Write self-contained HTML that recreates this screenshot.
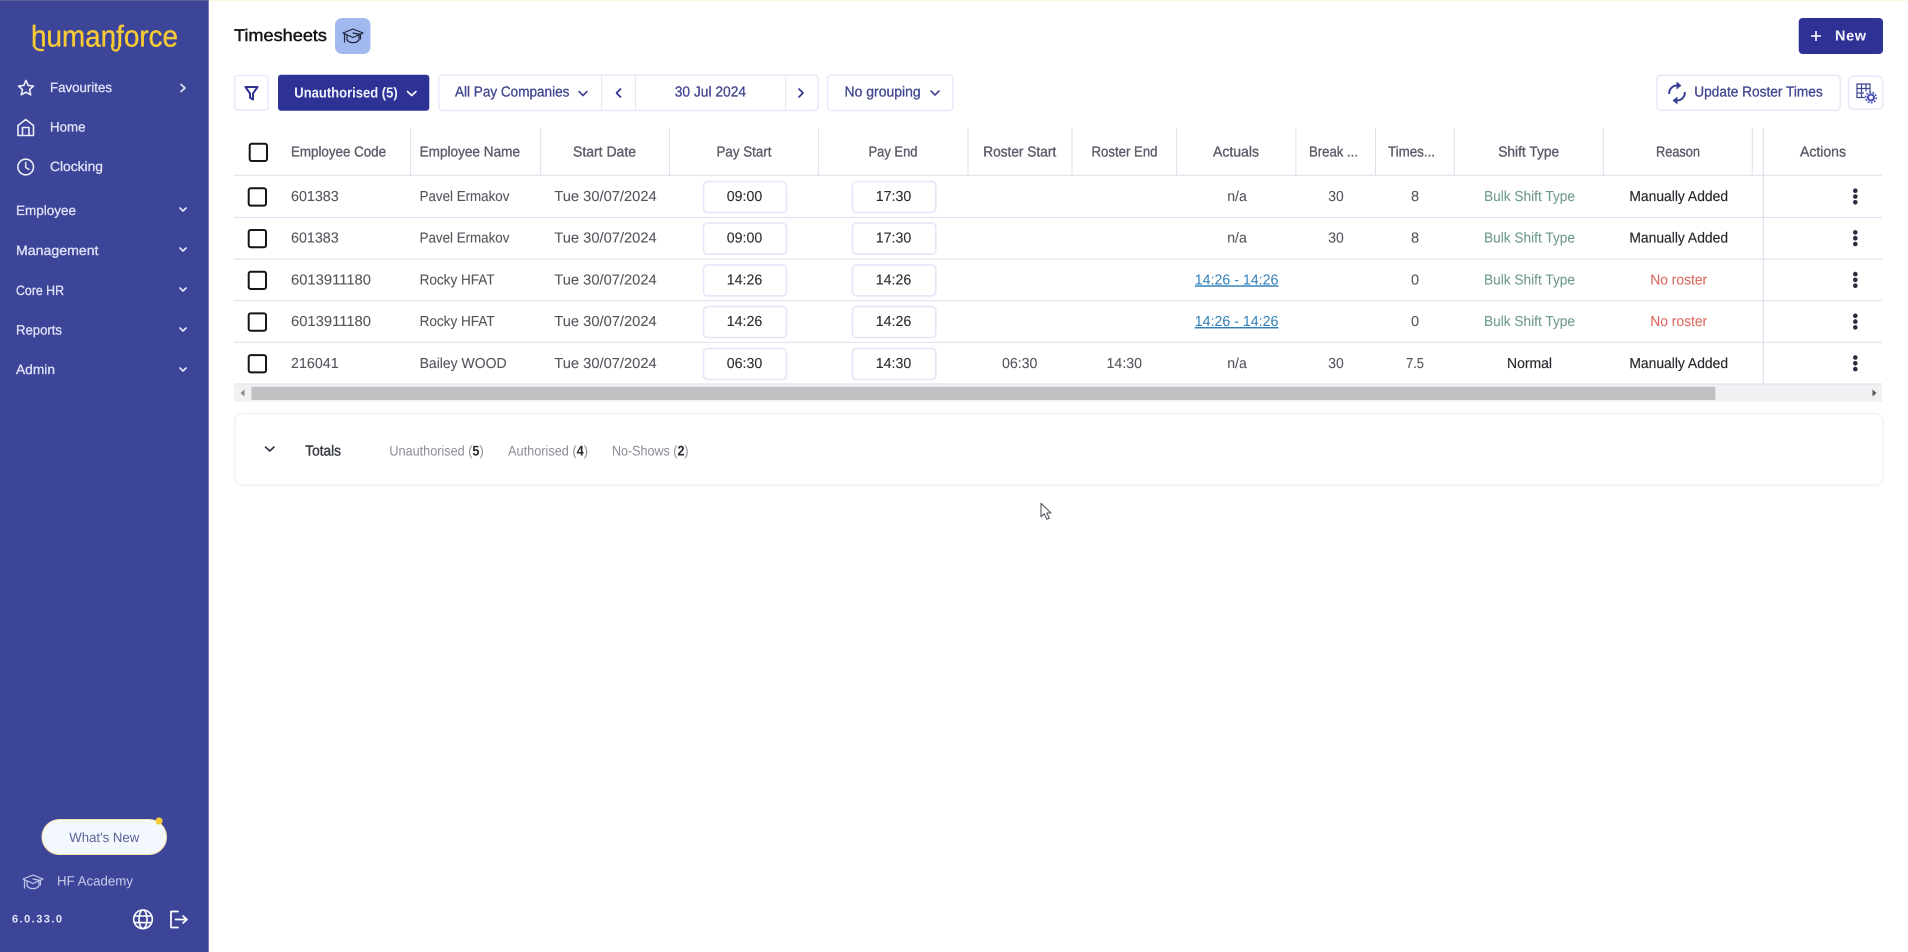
<!DOCTYPE html>
<html lang="en">
<head>
<meta charset="utf-8">
<title>Timesheets</title>
<style>
html,body{margin:0;padding:0;background:#fff;width:1908px;height:952px;overflow:hidden}
svg{display:block;position:absolute;left:0;top:0}
text{font-family:"Liberation Sans",sans-serif;font-size:14.5px;text-rendering:geometricPrecision}
.m{text-anchor:middle}
.nav{font-size:13.5px;fill:#dfe2f6;font-weight:400;stroke:#dfe2f6;stroke-width:.3}
.th{fill:#5c5c69;stroke:#5c5c69;stroke-width:.35}
.td{fill:#55555d;stroke:#55555d;stroke-width:.1}
.dk{fill:#26262c;stroke:#26262c;stroke-width:.15}
.tm{fill:#2b2b30;stroke:#2b2b30;stroke-width:.1}
.gr{fill:#6f9c88;stroke:#6f9c88;stroke-width:.1}
.rd{fill:#dc6a60;stroke:#dc6a60;stroke-width:.1}
.ln{fill:#2f7fb8;text-decoration:underline}
.btn{fill:#41468f;stroke:#41468f;stroke-width:.3}
.mut{fill:#8b8c96;font-size:14px}
.mut tspan{fill:#26262c;font-weight:700}
.box{fill:#fff;stroke:#e6e9f8;stroke-width:1.5}
.inp{fill:#fff;stroke:#e3e7f8;stroke-width:1.6}
.cb{fill:#fff;stroke:#151515;stroke-width:2}
.sep{stroke:#dfe1ea;stroke-width:1}
.row{stroke:#dfe2ee;stroke-width:1.2}
.chev{fill:none;stroke-width:1.6;stroke-linecap:round;stroke-linejoin:round}
</style>
</head>
<body>
<svg width="1908" height="952" viewBox="0 0 1908 952" xmlns="http://www.w3.org/2000/svg">
<defs>
<g id="cap" fill="none" stroke-linejoin="round" stroke-linecap="round">
<path d="M0-7 10-3 0 1.5-10-3Z"/>
<path d="M-6-1V4C-3.5 7.5 3.5 7.5 6 4V-1"/>
<path d="M0-3 7.5-1.5V3"/>
<path d="M-8.5-2V6"/>
</g>
<g id="dots" fill="#2c2c40"><circle cx="1855.3" cy="0" r="2.3"/><circle cx="1855.3" cy="5.8" r="2.3"/><circle cx="1855.3" cy="11.6" r="2.3"/></g>
</defs>

<rect width="1908" height="952" fill="#fff"/>
<rect x="209" width="1699" height="1.2" fill="#fdf7df"/>

<!-- sidebar -->
<rect width="208.7" height="952" fill="#3d4599"/>
<rect width="208.7" height="1" fill="#62648f"/>

<text x="31" y="46.5" style="font-size:30px;fill:#f8cb35;stroke:#f8cb35;stroke-width:.35" textLength="147" lengthAdjust="spacingAndGlyphs">humanforce</text>
<path d="M34 44C34.5 48.5 37 50.5 43 50M112 45C112 49 113 50.5 116 50.5 119 50.5 119.5 47 119.5 43" fill="none" stroke="#f8cb35" stroke-width="2.3" stroke-linecap="round"/>

<path d="M26 80.5 28.2 85.4 33.5 86 29.5 89.6 30.7 94.8 26 92.2 21.3 94.8 22.5 89.6 18.5 86 23.8 85.4Z" fill="none" stroke="#eceefa" stroke-width="1.6" stroke-linejoin="round"/>
<text class="nav" x="50" y="92" textLength="62" lengthAdjust="spacingAndGlyphs">Favourites</text>
<path class="chev" d="M181 84.5 185 88 181 91.5" stroke="#e8eaf8"/>

<path d="M18 135.5V125.5L25.7 119.5 33.5 125.5V135.5ZM22.5 135.5V127.5H29V135.5" fill="none" stroke="#eceefa" stroke-width="1.6" stroke-linejoin="round"/>
<text class="nav" x="50" y="131.7" textLength="35.5" lengthAdjust="spacingAndGlyphs">Home</text>

<circle cx="25.7" cy="167" r="7.8" fill="none" stroke="#eceefa" stroke-width="1.6"/>
<path d="M25.7 162.5V167.5L29 169.5" fill="none" stroke="#eceefa" stroke-width="1.5" stroke-linecap="round"/>
<text class="nav" x="50" y="171" textLength="53" lengthAdjust="spacingAndGlyphs">Clocking</text>

<text class="nav" x="16" y="215" textLength="60" lengthAdjust="spacingAndGlyphs">Employee</text>
<path class="chev" d="M180 209 183 212 186 209" stroke="#e8eaf8" transform="translate(0 -1)"/>
<text class="nav" x="16" y="255" textLength="82.5" lengthAdjust="spacingAndGlyphs">Management</text>
<path class="chev" d="M180 249 183 252 186 249" stroke="#e8eaf8" transform="translate(0 -1)"/>
<text class="nav" x="16" y="295" textLength="48" lengthAdjust="spacingAndGlyphs">Core HR</text>
<path class="chev" d="M180 289 183 292 186 289" stroke="#e8eaf8" transform="translate(0 -1)"/>
<text class="nav" x="16" y="334.3" textLength="46" lengthAdjust="spacingAndGlyphs">Reports</text>
<path class="chev" d="M180 329 183 332 186 329" stroke="#e8eaf8" transform="translate(0 -1)"/>
<text class="nav" x="16" y="374" textLength="39" lengthAdjust="spacingAndGlyphs">Admin</text>
<path class="chev" d="M180 369 183 372 186 369" stroke="#e8eaf8" transform="translate(0 -1)"/>

<rect x="42" y="819.5" width="124.5" height="35" rx="17.5" fill="#f3f8fe" stroke="#f7e3ab" stroke-width="1"/>
<circle cx="159" cy="821" r="3.6" fill="#f8cb35"/>
<text x="69.3" y="842" style="font-size:13.5px;fill:#5d6399" textLength="70" lengthAdjust="spacingAndGlyphs">What's New</text>
<use href="#cap" x="33" y="882" stroke="#c3c8e8" stroke-width="1.2"/>
<text x="57" y="885.7" style="font-size:13.5px;fill:#c8cce9" textLength="76" lengthAdjust="spacingAndGlyphs">HF Academy</text>
<text x="12" y="922.3" style="font-size:11px;font-weight:700;fill:#e4e7f6" textLength="50">6.0.33.0</text>
<g fill="none" stroke="#fff" stroke-width="1.6">
<circle cx="143" cy="919.3" r="9.3"/>
<ellipse cx="143" cy="919.3" rx="4" ry="9.3"/>
<path d="M134 916H152M134 922.6H152"/>
</g>
<path d="M178 911.5H171V927.5H178M175.5 919.5H186.5M183 916 187 919.5 183 923" fill="none" stroke="#fff" stroke-width="1.7" stroke-linejoin="round" stroke-linecap="round"/>

<!-- title -->
<text x="234" y="41" style="font-size:17px;fill:#141414;stroke:#141414;stroke-width:.45" textLength="93" lengthAdjust="spacingAndGlyphs">Timesheets</text>
<rect x="335" y="18" width="35.5" height="36" rx="7" fill="#a2b9f0"/>
<use href="#cap" x="353" y="36" stroke="#20243c" stroke-width="1.2"/>

<rect x="1798.7" y="18" width="84.3" height="36" rx="4" fill="#2f3295"/>
<path d="M1816 31V41M1811 36H1821" stroke="#fff" stroke-width="1.6"/>
<text x="1835" y="40.5" style="font-size:14.5px;font-weight:700;fill:#f2f3fb" textLength="31">New</text>

<!-- toolbar -->
<rect x="234.7" y="75.5" width="33.5" height="34.5" rx="3" class="box"/>
<path d="M245.5 87H257.5L253 93.5V99.5L250 97.8V93.5Z" fill="none" stroke="#2f3295" stroke-width="2" stroke-linejoin="round"/>
<rect x="278" y="74.7" width="151.3" height="36" rx="3" fill="#2f3295"/>
<text x="294.3" y="97.3" style="font-size:14.5px;font-weight:700;fill:#eef0fb" textLength="103.4" lengthAdjust="spacingAndGlyphs">Unauthorised (5)</text>
<path class="chev" d="M407.5 91.5 411.7 95.5 416 91.5" stroke="#fff"/>

<rect x="438.8" y="75" width="379.4" height="35.5" rx="4" class="box"/>
<path d="M601.6 75V110.5M635.5 75V110.5M785.7 75V110.5" stroke="#e3e6f6" stroke-width="1"/>
<text class="btn" x="455" y="96.7" textLength="114.4" lengthAdjust="spacingAndGlyphs">All Pay Companies</text>
<path class="chev" d="M579 91.5 583 95.5 587 91.5" stroke="#41468f"/>
<path class="chev" d="M620.5 89 616.5 93 620.5 97" stroke="#2f3295"/>
<text class="btn m" x="710.4" y="96.7" textLength="71.4" lengthAdjust="spacingAndGlyphs">30 Jul 2024</text>
<path class="chev" d="M799 89 803 93 799 97" stroke="#2f3295"/>

<rect x="827.5" y="75" width="125.5" height="35.5" rx="4" class="box"/>
<text class="btn" x="844.5" y="96.7" textLength="76.2" lengthAdjust="spacingAndGlyphs">No grouping</text>
<path class="chev" d="M931 91 935 95 939 91" stroke="#41468f"/>

<rect x="1656.9" y="75.2" width="183.3" height="35" rx="4" class="box"/>
<g fill="none" stroke="#3a3f96" stroke-width="2">
<path d="M1669.2 94A7.8 7.8 0 0 1 1677 85.5"/>
<path d="M1684.8 92A7.8 7.8 0 0 1 1677 100.5"/>
</g>
<path d="M1676.5 81.5 1681.5 85.5 1676.5 89.5ZM1677.5 96.5 1672.5 100.5 1677.5 104.5Z" fill="#3a3f96"/>
<text class="btn" x="1694.3" y="96.7" textLength="128.4" lengthAdjust="spacingAndGlyphs">Update Roster Times</text>

<rect x="1848.5" y="76.2" width="34.3" height="33" rx="5" class="box"/>
<path d="M1870 93V84H1857V97.5H1865M1857 88.5H1870M1861.5 84V97.5M1866 84V91.5M1857 93H1864" fill="none" stroke="#3f4492" stroke-width="1.2"/>
<circle cx="1871" cy="97.5" r="3" fill="none" stroke="#4d56b8" stroke-width="2.2"/>
<circle cx="1871" cy="97.5" r="5.3" fill="none" stroke="#4d56b8" stroke-width="1.6" stroke-dasharray="1.8 1.5"/>

<!-- table header -->
<rect x="249.7" y="143.7" width="17.3" height="17.3" rx="2" class="cb"/>
<path class="sep" d="M410.6 128V175M540.4 128V175M669.4 128V175M818.4 128V175M968 128V175M1072 128V175M1176.6 128V175M1295.9 128V175M1375.5 128V175M1454.3 128V175M1603.3 128V175M1752.3 128V175"/>
<path d="M1763.3 128V384" stroke="#d8dce8" stroke-width="1"/>
<text class="th" x="291" y="156.7" textLength="95" lengthAdjust="spacingAndGlyphs">Employee Code</text>
<text class="th" x="419.6" y="156.7" textLength="100.4" lengthAdjust="spacingAndGlyphs">Employee Name</text>
<text class="th m" x="604.5" y="156.7" textLength="63" lengthAdjust="spacingAndGlyphs">Start Date</text>
<text class="th m" x="744" y="156.7" textLength="55" lengthAdjust="spacingAndGlyphs">Pay Start</text>
<text class="th m" x="893" y="156.7" textLength="49" lengthAdjust="spacingAndGlyphs">Pay End</text>
<text class="th m" x="1019.7" y="156.7" textLength="73" lengthAdjust="spacingAndGlyphs">Roster Start</text>
<text class="th m" x="1124.5" y="156.7" textLength="66" lengthAdjust="spacingAndGlyphs">Roster End</text>
<text class="th m" x="1236" y="156.7" textLength="46" lengthAdjust="spacingAndGlyphs">Actuals</text>
<text class="th" x="1309" y="156.7" textLength="49" lengthAdjust="spacingAndGlyphs">Break ...</text>
<text class="th" x="1388" y="156.7" textLength="47" lengthAdjust="spacingAndGlyphs">Times...</text>
<text class="th m" x="1528.7" y="156.7" textLength="61" lengthAdjust="spacingAndGlyphs">Shift Type</text>
<text class="th m" x="1678" y="156.7" textLength="44" lengthAdjust="spacingAndGlyphs">Reason</text>
<text class="th m" x="1823" y="156.7" textLength="46" lengthAdjust="spacingAndGlyphs">Actions</text>

<path class="row" d="M234 175.3H1882M234 217.5H1882M234 259H1882M234 300.7H1882M234 342.3H1882M234 384H1882"/>

<!-- row 1 -->
<rect x="248.7" y="188.3" width="17.3" height="17.3" rx="2" class="cb"/>
<text class="td" x="291" y="201" textLength="47.7" lengthAdjust="spacingAndGlyphs">601383</text>
<text class="td" x="419.6" y="201" textLength="89.8" lengthAdjust="spacingAndGlyphs">Pavel Ermakov</text>
<text class="td m" x="605.5" y="201" textLength="102.4" lengthAdjust="spacingAndGlyphs">Tue 30/07/2024</text>
<rect x="703.5" y="181.5" width="83" height="31" rx="4" class="inp"/>
<text class="tm m" x="744.5" y="201" textLength="35.5" lengthAdjust="spacingAndGlyphs">09:00</text>
<rect x="852.5" y="181.5" width="83.3" height="31" rx="4" class="inp"/>
<text class="tm m" x="893.5" y="201" textLength="35.5" lengthAdjust="spacingAndGlyphs">17:30</text>
<text class="td m" x="1237" y="201" textLength="19.6" lengthAdjust="spacingAndGlyphs">n/a</text>
<text class="td m" x="1336" y="201" textLength="15.5" lengthAdjust="spacingAndGlyphs">30</text>
<text class="td m" x="1415" y="201">8</text>
<text class="gr m" x="1529.5" y="201" textLength="91" lengthAdjust="spacingAndGlyphs">Bulk Shift Type</text>
<text class="dk m" x="1678.7" y="201" textLength="98.7" lengthAdjust="spacingAndGlyphs">Manually Added</text>
<use href="#dots" y="190.7"/>

<!-- row 2 -->
<rect x="248.7" y="230" width="17.3" height="17.3" rx="2" class="cb"/>
<text class="td" x="291" y="242.7" textLength="47.7" lengthAdjust="spacingAndGlyphs">601383</text>
<text class="td" x="419.6" y="242.7" textLength="89.8" lengthAdjust="spacingAndGlyphs">Pavel Ermakov</text>
<text class="td m" x="605.5" y="242.7" textLength="102.4" lengthAdjust="spacingAndGlyphs">Tue 30/07/2024</text>
<rect x="703.5" y="223.2" width="83" height="31" rx="4" class="inp"/>
<text class="tm m" x="744.5" y="242.7" textLength="35.5" lengthAdjust="spacingAndGlyphs">09:00</text>
<rect x="852.5" y="223.2" width="83.3" height="31" rx="4" class="inp"/>
<text class="tm m" x="893.5" y="242.7" textLength="35.5" lengthAdjust="spacingAndGlyphs">17:30</text>
<text class="td m" x="1237" y="242.7" textLength="19.6" lengthAdjust="spacingAndGlyphs">n/a</text>
<text class="td m" x="1336" y="242.7" textLength="15.5" lengthAdjust="spacingAndGlyphs">30</text>
<text class="td m" x="1415" y="242.7">8</text>
<text class="gr m" x="1529.5" y="242.7" textLength="91" lengthAdjust="spacingAndGlyphs">Bulk Shift Type</text>
<text class="dk m" x="1678.7" y="242.7" textLength="98.7" lengthAdjust="spacingAndGlyphs">Manually Added</text>
<use href="#dots" y="232.4"/>

<!-- row 3 -->
<rect x="248.7" y="271.7" width="17.3" height="17.3" rx="2" class="cb"/>
<text class="td" x="291" y="284.3" textLength="80" lengthAdjust="spacingAndGlyphs">6013911180</text>
<text class="td" x="419.6" y="284.3" textLength="75" lengthAdjust="spacingAndGlyphs">Rocky HFAT</text>
<text class="td m" x="605.5" y="284.3" textLength="102.4" lengthAdjust="spacingAndGlyphs">Tue 30/07/2024</text>
<rect x="703.5" y="264.9" width="83" height="31" rx="4" class="inp"/>
<text class="tm m" x="744.5" y="284.3" textLength="35.5" lengthAdjust="spacingAndGlyphs">14:26</text>
<rect x="852.5" y="264.9" width="83.3" height="31" rx="4" class="inp"/>
<text class="tm m" x="893.5" y="284.3" textLength="35.5" lengthAdjust="spacingAndGlyphs">14:26</text>
<text class="ln m" x="1236.6" y="284.3" textLength="83.6" lengthAdjust="spacingAndGlyphs">14:26 - 14:26</text>
<text class="td m" x="1415" y="284.3">0</text>
<text class="gr m" x="1529.5" y="284.3" textLength="91" lengthAdjust="spacingAndGlyphs">Bulk Shift Type</text>
<text class="rd m" x="1678.7" y="284.3" textLength="57" lengthAdjust="spacingAndGlyphs">No roster</text>
<use href="#dots" y="274.1"/>

<!-- row 4 -->
<rect x="248.7" y="313.4" width="17.3" height="17.3" rx="2" class="cb"/>
<text class="td" x="291" y="326" textLength="80" lengthAdjust="spacingAndGlyphs">6013911180</text>
<text class="td" x="419.6" y="326" textLength="75" lengthAdjust="spacingAndGlyphs">Rocky HFAT</text>
<text class="td m" x="605.5" y="326" textLength="102.4" lengthAdjust="spacingAndGlyphs">Tue 30/07/2024</text>
<rect x="703.5" y="306.6" width="83" height="31" rx="4" class="inp"/>
<text class="tm m" x="744.5" y="326" textLength="35.5" lengthAdjust="spacingAndGlyphs">14:26</text>
<rect x="852.5" y="306.6" width="83.3" height="31" rx="4" class="inp"/>
<text class="tm m" x="893.5" y="326" textLength="35.5" lengthAdjust="spacingAndGlyphs">14:26</text>
<text class="ln m" x="1236.6" y="326" textLength="83.6" lengthAdjust="spacingAndGlyphs">14:26 - 14:26</text>
<text class="td m" x="1415" y="326">0</text>
<text class="gr m" x="1529.5" y="326" textLength="91" lengthAdjust="spacingAndGlyphs">Bulk Shift Type</text>
<text class="rd m" x="1678.7" y="326" textLength="57" lengthAdjust="spacingAndGlyphs">No roster</text>
<use href="#dots" y="315.8"/>

<!-- row 5 -->
<rect x="248.7" y="355.1" width="17.3" height="17.3" rx="2" class="cb"/>
<text class="td" x="291" y="368" textLength="47.7" lengthAdjust="spacingAndGlyphs">216041</text>
<text class="td" x="419.6" y="368" textLength="87" lengthAdjust="spacingAndGlyphs">Bailey WOOD</text>
<text class="td m" x="605.5" y="368" textLength="102.4" lengthAdjust="spacingAndGlyphs">Tue 30/07/2024</text>
<rect x="703.5" y="348.5" width="83" height="31" rx="4" class="inp"/>
<text class="tm m" x="744.5" y="368" textLength="35.5" lengthAdjust="spacingAndGlyphs">06:30</text>
<rect x="852.5" y="348.5" width="83.3" height="31" rx="4" class="inp"/>
<text class="tm m" x="893.5" y="368" textLength="35.5" lengthAdjust="spacingAndGlyphs">14:30</text>
<text class="td m" x="1019.7" y="368" textLength="35.5" lengthAdjust="spacingAndGlyphs">06:30</text>
<text class="td m" x="1124.3" y="368" textLength="35.5" lengthAdjust="spacingAndGlyphs">14:30</text>
<text class="td m" x="1237" y="368" textLength="19.6" lengthAdjust="spacingAndGlyphs">n/a</text>
<text class="td m" x="1336" y="368" textLength="15.5" lengthAdjust="spacingAndGlyphs">30</text>
<text class="td m" x="1415" y="368" textLength="18" lengthAdjust="spacingAndGlyphs">7.5</text>
<text class="dk m" x="1529.5" y="368" textLength="45" lengthAdjust="spacingAndGlyphs">Normal</text>
<text class="dk m" x="1678.7" y="368" textLength="98.7" lengthAdjust="spacingAndGlyphs">Manually Added</text>
<use href="#dots" y="357.5"/>

<!-- scrollbar -->
<rect x="234" y="384.5" width="1648" height="17.2" fill="#f1f1f3"/>
<rect x="251.4" y="386.7" width="1463.9" height="13.3" fill="#c1c1c3"/>
<path d="M244.5 389.5V396.5L240.5 393Z" fill="#8a8a8a"/>
<path d="M1872.5 389.5V396.5L1876.5 393Z" fill="#555"/>

<!-- totals -->
<rect x="234.7" y="413.5" width="1648.3" height="71.8" rx="8" fill="#fff" stroke="#eef0f8" stroke-width="1.3"/>
<path class="chev" d="M265.5 447 269.8 451 274 447" stroke="#33344a"/>
<text x="305.3" y="455.3" style="font-size:14.5px;fill:#3a3d46;stroke:#3a3d46;stroke-width:.45" textLength="35.7" lengthAdjust="spacingAndGlyphs">Totals</text>
<text class="mut" x="389.4" y="455.3" textLength="94.3" lengthAdjust="spacingAndGlyphs">Unauthorised (<tspan>5</tspan>)</text>
<text class="mut" x="508" y="455.3" textLength="80" lengthAdjust="spacingAndGlyphs">Authorised (<tspan>4</tspan>)</text>
<text class="mut" x="612" y="455.3" textLength="76.6" lengthAdjust="spacingAndGlyphs">No-Shows (<tspan>2</tspan>)</text>

<!-- cursor -->
<path d="M1041 503.3V516.8L1044.3 513.8 1046.8 519.3 1049.3 518.2 1046.8 513H1051Z" fill="#fff" stroke="#55565e" stroke-width="1.1" stroke-linejoin="round"/>
</svg>
</body>
</html>
